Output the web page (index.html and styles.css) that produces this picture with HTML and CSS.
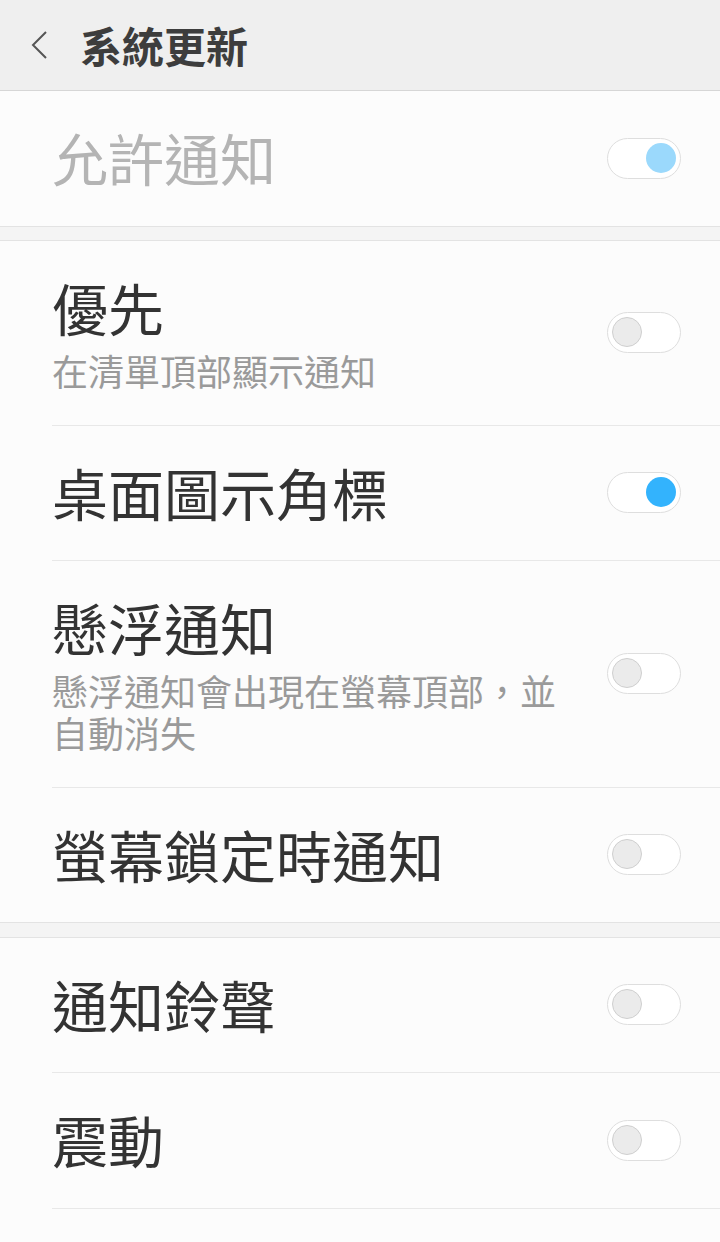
FILE: index.html
```html
<!DOCTYPE html>
<html>
<head>
<meta charset="utf-8">
<link rel="stylesheet" href="styles.css">
</head>
<body>

<header class="topbar">
  <svg class="back" width="18" height="30" viewBox="0 0 18 30">
    <polyline points="15,2 2,15 15,28" fill="none" stroke="#555" stroke-width="2"/>
  </svg>
  <h1 class="title">系統更新</h1>
</header>

<section class="group">
  <div class="row last">
    <div class="text">
      <div class="label disabled">允許通知</div>
    </div>
    <span class="switch on dim"><span class="knob"></span></span>
  </div>
</section>

<div class="gap"></div>

<section class="group">
  <div class="row">
    <div class="text">
      <div class="label">優先</div>
      <div class="summary">在清單頂部顯示通知</div>
    </div>
    <span class="switch"><span class="knob"></span></span>
  </div>
  <div class="row">
    <div class="text">
      <div class="label">桌面圖示角標</div>
    </div>
    <span class="switch on"><span class="knob"></span></span>
  </div>
  <div class="row">
    <div class="text">
      <div class="label">懸浮通知</div>
      <div class="summary">懸浮通知會出現在螢幕頂部，並自動消失</div>
    </div>
    <span class="switch"><span class="knob"></span></span>
  </div>
  <div class="row last">
    <div class="text">
      <div class="label">螢幕鎖定時通知</div>
    </div>
    <span class="switch"><span class="knob"></span></span>
  </div>
</section>

<div class="gap"></div>

<section class="group">
  <div class="row">
    <div class="text">
      <div class="label">通知鈴聲</div>
    </div>
    <span class="switch"><span class="knob"></span></span>
  </div>
  <div class="row">
    <div class="text">
      <div class="label">震動</div>
    </div>
    <span class="switch"><span class="knob"></span></span>
  </div>
</section>

</body>
</html>
```

FILE: styles.css
```css
body {
  margin: 0;
  background-color: #fcfcfc;
  font-family: "Noto Sans CJK TC", "Noto Sans", sans-serif;
  color: #333;
}

.topbar {
  display: flex;
  align-items: center;
  height: 90px;
  padding-left: 31px;
  background-color: #efefef;
  border-bottom: 1px solid #d6d6d6;
}

.back {
  display: block;
  margin-right: 31px;
}

.title {
  margin: 0;
  font-size: 42px;
  font-weight: bold;
  color: #3d3d3d;
  line-height: 1;
}

.group {
  padding-left: 52px;
}

.row {
  display: flex;
  align-items: center;
  padding-right: 39px;
  border-bottom: 1px solid #e8e8e8;
}

.row.last {
  border-bottom: none;
}

.text {
  flex: 1;
  margin-right: 30px;
  padding: 30px 0 33.5px;
}

.label {
  font-size: 56px;
  line-height: 71px;
  color: #333;
}

.label.disabled {
  color: #b4b4b4;
}

.summary {
  margin-top: 7px;
  font-size: 36px;
  line-height: 42px;
  color: #9a9a9a;
}

.gap {
  height: 13.5px;
  background-color: #f4f4f4;
  border-top: 1px solid #e3e3e3;
  border-bottom: 1px solid #e3e3e3;
}

/* toggle switch */
.switch {
  position: relative;
  box-sizing: border-box;
  width: 74px;
  height: 41px;
  border: 1.5px solid #dedede;
  border-radius: 21px;
  background-color: #fff;
}

.knob {
  position: absolute;
  top: 4px;
  left: 4px;
  box-sizing: border-box;
  width: 30px;
  height: 30px;
  border-radius: 50%;
  background-color: #ebebeb;
  border: 1px solid #cfcfcf;
}

.switch.on .knob {
  left: auto;
  right: 4px;
  background-color: #33b3fd;
  border: none;
}

.switch.dim .knob {
  background-color: #9bd9fc;
}
```
